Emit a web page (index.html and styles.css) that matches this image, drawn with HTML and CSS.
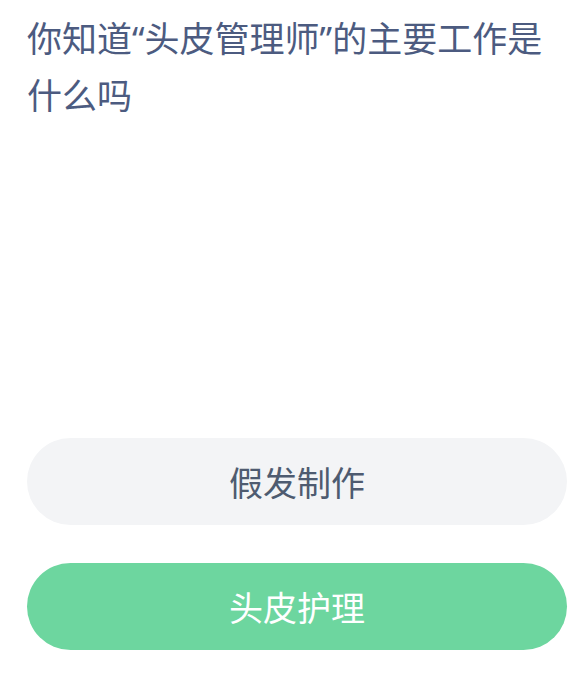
FILE: index.html
```html
<!DOCTYPE html>
<html lang="zh-CN">
<head>
  <meta charset="UTF-8">
  <meta name="viewport" content="width=device-width, initial-scale=1.0" />
  <title>每日一题</title>
  <link rel="stylesheet" href="styles.css">
</head>
<body>
  <div class="quiz">
    <p class="question">你知道“头皮管理师”的主要工作是什么吗</p>

    <div class="options">
      <button class="option">假发制作</button>
      <button class="option option-answer">头皮护理</button>
    </div>
  </div>
</body>
</html>
```

FILE: styles.css
```css
body {
  margin: 0;
  background-color: #ffffff;
  font-family: "Noto Sans CJK SC", "Noto Sans", sans-serif;
}
.quiz {
  padding: 10px 16px 0 27px;
}
.question {
  margin: 0 14px 0 0;
  font-family: "Noto Sans", "Noto Sans CJK SC", sans-serif;
  font-size: 35px;
  line-height: 57px;
  color: #4c5b80;
}
.options {
  display: flex; flex-direction: column; gap: 38px;
  margin-top: 314px;
}
.option {
  height: 87px; width: 100%;
  border: none; border-radius: 44px;
  background-color: #f3f4f6;
  color: #4e5b70;
  font-family: inherit; font-size: 34px;
  padding: 0;
}
.option-answer {
  background-color: #6dd69f;
  color: #ffffff;
}
```
